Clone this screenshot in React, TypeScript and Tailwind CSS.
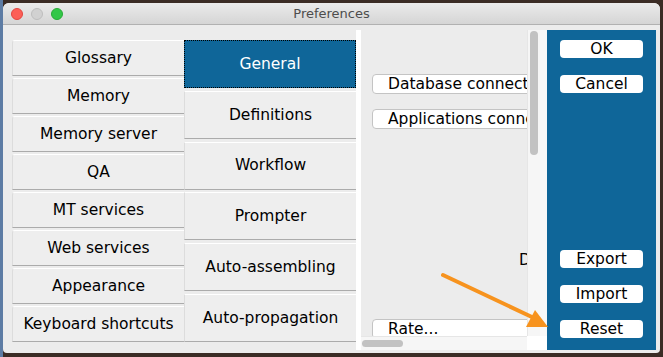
import React from 'react'

const leftTabs = ['Glossary', 'Memory', 'Memory server', 'QA', 'MT services', 'Web services', 'Appearance', 'Keyboard shortcuts']
const rightTabs = ['General', 'Definitions', 'Workflow', 'Prompter', 'Auto-assembling', 'Auto-propagation']

function Light({ fill, ring }: { fill: string; ring: string }) {
  return <span className={`w-[12px] h-[12px] rounded-full border ${fill} ${ring}`} />
}

function SideButton({ label, className = '' }: { label: string; className?: string }) {
  return (
    <button className={`h-[18px] w-[83px] rounded-[4px] bg-white text-[15.5px] leading-[19px] text-black ${className}`}>
      {label}
    </button>
  )
}

function ContentButton({ label, className = '' }: { label: string; className?: string }) {
  return (
    <div className={`h-[20px] w-[200px] shrink-0 rounded-[4px] border border-[#c4c4c4] bg-white pl-[15px] text-[15.5px] leading-[19px] text-black whitespace-nowrap ${className}`}>
      {label}
    </div>
  )
}

export default function App() {
  return (
    <div
      className="relative w-[663px] h-[357px] overflow-hidden bg-[#3b2c25] border-l-[3px] border-l-[#5d7ca4] pt-[3px] pr-[3px] pb-[4px]"
      style={{ fontFamily: '"DejaVu Sans", "Liberation Sans", sans-serif' }}
    >
      <div className="flex flex-col h-full rounded-t-[6px] rounded-b-[4px] bg-[#ececec] overflow-hidden">
        {/* title bar */}
        <div className="relative flex items-center h-[22px] shrink-0 bg-gradient-to-b from-[#ebebeb] to-[#d5d5d5] border-b border-[#b1b1b1]">
          <div className="flex items-center gap-[8px] pl-[8px]">
            <Light fill="bg-[#fc5f57]" ring="border-[#e1463f]" />
            <Light fill="bg-[#d1d1d1]" ring="border-[#bdbdbd]" />
            <Light fill="bg-[#33c748]" ring="border-[#28aa36]" />
          </div>
          <div className="absolute inset-0 flex items-center justify-center text-[13px] text-[#4d4d4d]">Preferences</div>
        </div>

        {/* body */}
        <div className="flex items-start flex-1">
          {/* tabs */}
          <div className="flex ml-[9px] mt-[15px]">
            <div className="flex flex-col gap-[2px] w-[172px]">
              {leftTabs.map(t => (
                <div
                  key={t}
                  className="h-[36px] flex items-center justify-center pt-[1px] rounded-tl-[3px] bg-[#eeeeee] border-t border-t-white border-l border-l-[#dcdcdc] border-b border-b-[#ababab] text-[15.5px] text-black"
                >
                  {t}
                </div>
              ))}
            </div>
            <div className="flex flex-col justify-between w-[172px] h-[302px]">
              {rightTabs.map((t, i) => (
                <div
                  key={t}
                  className={
                    i === 0
                      ? 'h-[48px] flex items-center justify-center pt-[1px] bg-[#0f6699] border border-dotted border-black text-[15.5px] text-white'
                      : 'h-[48px] flex items-center justify-center pt-[1px] bg-[#eeeeee] border-t border-t-white border-l border-l-[#dcdcdc] border-b border-b-[#ababab] text-[15.5px] text-black'
                  }
                >
                  {t}
                </div>
              ))}
            </div>
          </div>

          {/* white strip */}
          <div className="w-[5px] h-[320px] mt-[5px] bg-white" />

          {/* content scroll pane */}
          <div className="mt-[5px] w-[186px] h-[320px] flex flex-col">
            <div className="flex h-[306px]">
              <div className="w-[166px] overflow-hidden bg-[#ececec] flex flex-col pl-[11px]">
                <ContentButton label="Database connection" className="mt-[44px]" />
                <ContentButton label="Applications connection" className="mt-[15px]" />
                <div className="mt-[123px] pl-[147px] h-[16px] text-[15.5px] leading-[16px] text-black whitespace-nowrap">Default</div>
                <ContentButton label="Rate..." className="mt-[51px]" />
              </div>
              <div className="w-[13px] bg-[#f6f6f6] border-l border-[#e6e6e6] flex justify-center pt-[1px]">
                <div className="w-[8px] h-[124px] rounded-full bg-[#c2c2c2]" />
              </div>
              <div className="w-[7px] bg-[#f9f9f9]" />
            </div>
            <div className="flex h-[14px]">
              <div className="w-[166px] bg-[#f6f6f6] border-t border-[#e6e6e6] pl-[1px] pt-[3px]">
                <div className="w-[41px] h-[7px] rounded-full bg-[#c2c2c2]" />
              </div>
              <div className="w-[20px] bg-white" />
            </div>
          </div>

          {/* action panel */}
          <div className="mt-[5px] w-[109px] h-[320px] bg-[#0f6699] flex flex-col pl-[13px] pt-[10px]">
            <SideButton label="OK" />
            <SideButton label="Cancel" className="mt-[17px]" />
            <SideButton label="Export" className="mt-[157px]" />
            <SideButton label="Import" className="mt-[17px]" />
            <SideButton label="Reset" className="mt-[17px]" />
          </div>
        </div>
      </div>

      {/* annotation arrow */}
      <svg className="absolute left-[-3px] top-0 pointer-events-none" width="663" height="357" viewBox="0 0 663 357">
        <line x1="443" y1="275" x2="534" y2="318" stroke="#f7931e" strokeWidth="4" strokeLinecap="round" />
        <polygon points="548,327 526,327 535,310" fill="#f7931e" />
      </svg>
    </div>
  )
}
